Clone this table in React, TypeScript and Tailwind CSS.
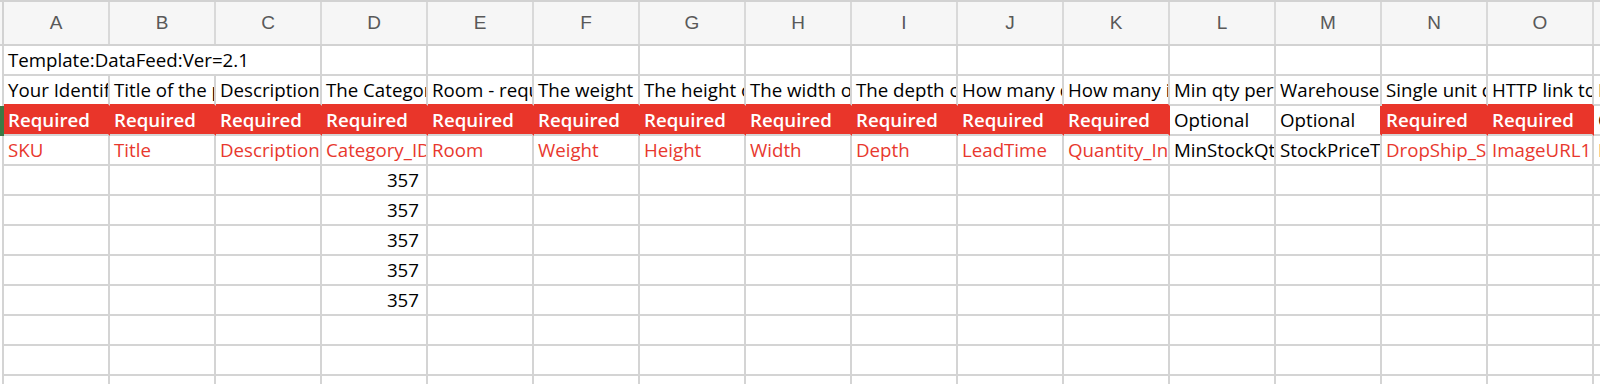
import React from "react";

const letters = ["A", "B", "C", "D", "E", "F", "G", "H", "I", "J", "K", "L", "M", "N", "O", "P"];

const descriptions = [
  "Your Identifier for the product",
  "Title of the product",
  "Description of the product",
  "The Category ID of the product",
  "Room - required",
  "The weight of the product",
  "The height of the product",
  "The width of the product",
  "The depth of the product",
  "How many days lead time",
  "How many in stock",
  "Min qty per order",
  "Warehouse stock price",
  "Single unit dropship price",
  "HTTP link to image",
  "HTTP link to image 2",
];

// true = Required (red fill), false = Optional
const required = [true, true, true, true, true, true, true, true, true, true, true, false, false, true, true, false];

const fields = [
  "SKU",
  "Title",
  "Description",
  "Category_ID",
  "Room",
  "Weight",
  "Height",
  "Width",
  "Depth",
  "LeadTime",
  "Quantity_InStock",
  "MinStockQty",
  "StockPriceTrade",
  "DropShip_SinglePrice",
  "ImageURL1",
  "ImageURL2",
];

const LeftEdge = ({ green = false }: { green?: boolean }) =>
  green ? (
    <div className="w-[4px] h-full shrink-0 bg-[#3b7a45]"></div>
  ) : (
    <div className="w-[4px] h-full shrink-0 bg-white border-r-2 border-[#d4d4d4]"></div>
  );

const App: React.FC = () => (
  <div className="w-[1600px] h-[384px] overflow-hidden bg-white text-black font-['Open_Sans',sans-serif] text-[18.7px]">
    {/* column letters */}
    <div className="flex h-[46px] bg-[#f6f6f6] border-t-2 border-b-2 border-[#d2d2d2]">
      <div className="w-[4px] h-full shrink-0 border-r-2 border-[#d2d2d2]"></div>
      {letters.map((l) => (
        <div
          key={l}
          className="w-[106px] shrink-0 h-full flex items-center justify-center border-r-2 border-[#d9d9d9] text-[19px] text-[#595959] font-['Liberation_Sans',sans-serif]"
        >
          {l}
        </div>
      ))}
    </div>

    {/* row 1 */}
    <div className="flex h-[30px]">
      <LeftEdge />
      <div className="w-[318px] shrink-0 h-full flex items-center pl-[4px] border-r-2 border-b-2 border-[#d4d4d4] whitespace-nowrap">
        Template:DataFeed:Ver=2.1
      </div>
      {letters.slice(3).map((l) => (
        <div key={l} className="w-[106px] shrink-0 h-full border-r-2 border-b-2 border-[#d4d4d4]"></div>
      ))}
    </div>

    {/* row 2 */}
    <div className="flex h-[30px]">
      <LeftEdge />
      {descriptions.map((d, i) => (
        <div
          key={i}
          className={
            required[i]
              ? "w-[106px] shrink-0 h-full flex items-center pl-[4px] overflow-hidden whitespace-nowrap border-r-2 border-b-2 border-r-[#d4d4d4] border-b-[#e9352a]"
              : "w-[106px] shrink-0 h-full flex items-center pl-[4px] overflow-hidden whitespace-nowrap border-r-2 border-b-2 border-[#d4d4d4]"
          }
        >
          {d}
        </div>
      ))}
    </div>

    {/* row 3 */}
    <div className="flex h-[30px]">
      <LeftEdge green />
      {required.map((r, i) => (
        <div
          key={i}
          className={
            r
              ? "w-[106px] shrink-0 h-full flex items-center pl-[4px] overflow-hidden whitespace-nowrap bg-[#e9352a] text-white font-semibold border-r-2 border-b-2 border-r-[#e9352a] border-b-[#d4d4d4]"
              : required[i + 1]
              ? "w-[106px] shrink-0 h-full flex items-center pl-[4px] overflow-hidden whitespace-nowrap border-r-2 border-b-2 border-r-[#e9352a] border-b-[#d4d4d4]"
              : "w-[106px] shrink-0 h-full flex items-center pl-[4px] overflow-hidden whitespace-nowrap border-r-2 border-b-2 border-[#d4d4d4]"
          }
        >
          {r ? "Required" : "Optional"}
        </div>
      ))}
    </div>

    {/* row 4 */}
    <div className="flex h-[30px]">
      <LeftEdge />
      {fields.map((f, i) => (
        <div
          key={i}
          className={
            i === 11 || i === 12
              ? "w-[106px] shrink-0 h-full flex items-center pl-[4px] overflow-hidden whitespace-nowrap border-r-2 border-b-2 border-[#d4d4d4]"
              : "w-[106px] shrink-0 h-full flex items-center pl-[4px] overflow-hidden whitespace-nowrap border-r-2 border-b-2 border-[#d4d4d4] text-[#e8382e]"
          }
        >
          {f}
        </div>
      ))}
    </div>

    {/* data rows */}
    {[0, 1, 2, 3, 4, 5, 6, 7, 8].map((r) => (
      <div key={r} className="flex h-[30px]">
        <LeftEdge />
        {letters.map((l, i) => (
          <div
            key={l}
            className="w-[106px] shrink-0 h-full flex items-center justify-end pr-[7px] border-r-2 border-b-2 border-[#d4d4d4]"
          >
            {i === 3 && r < 5 ? "357" : ""}
          </div>
        ))}
      </div>
    ))}
  </div>
);

export default App;
